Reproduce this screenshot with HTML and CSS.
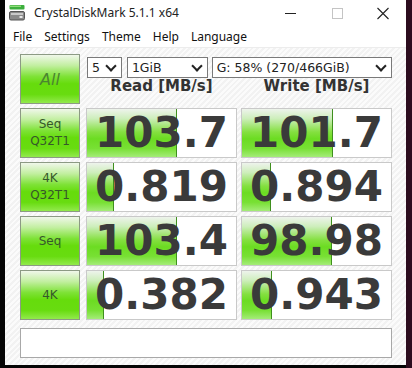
FILE: index.html
```html
<!DOCTYPE html>
<html lang="en">

<head>
  <meta charset="utf-8">
  <title>CrystalDiskMark 5.1.1 x64</title>
  <link rel="stylesheet" href="styles.css">
</head>

<body>
  <div class="window">

    <!-- Title bar -->
    <div class="titlebar">
      <svg class="app-icon" width="16" height="16" viewBox="0 0 16 16">
        <rect x="0.5" y="0" width="15" height="4.5" rx="1" fill="#3cae3c" />
        <rect x="1" y="0.6" width="11" height="1.4" fill="#8fdc7a" />
        <rect x="0.5" y="6.5" width="15" height="8.5" rx="1.5" fill="#8a8a8a" stroke="#555" />
        <rect x="2" y="8" width="12" height="2" fill="#c9c9c9" />
        <rect x="10.5" y="11" width="3" height="2" fill="#e8e8e8" />
      </svg>
      <span class="app-title">CrystalDiskMark 5.1.1 x64</span>
      <div class="controls">
        <svg class="ctl" width="46" height="24" viewBox="0 0 46 24">
          <line x1="17" y1="12.5" x2="28" y2="12.5" stroke="#222" stroke-width="1" />
        </svg>
        <svg class="ctl" width="46" height="24" viewBox="0 0 46 24">
          <rect x="18.5" y="7.5" width="10" height="10" fill="none" stroke="#c4c4c4" />
        </svg>
        <svg class="ctl" width="46" height="24" viewBox="0 0 46 24">
          <path d="M17.5 7 L28.5 18 M28.5 7 L17.5 18" stroke="#222" stroke-width="1.1" />
        </svg>
      </div>
    </div>

    <!-- Menu -->
    <div class="menubar">
      <span>File</span>
      <span>Settings</span>
      <span>Theme</span>
      <span>Help</span>
      <span>Language</span>
    </div>

    <!-- Benchmark panel -->
    <div class="main">
      <div class="row top-row">
        <div class="btn btn-all">All</div>
        <div class="top-controls">
          <div class="selects">
            <div class="select sel-count">5<span class="chev"></span></div>
            <div class="select sel-size">1GiB<span class="chev"></span></div>
            <div class="select sel-drive">G: 58% (270/466GiB)<span class="chev"></span></div>
          </div>
          <div class="headers">
            <div class="head">Read [MB/s]</div>
            <div class="head">Write [MB/s]</div>
          </div>
        </div>
      </div>

      <div class="row">
        <div class="btn">Seq<br>Q32T1</div>
        <div class="result"><div class="bar" style="width: 89px;"></div><span>103.7</span></div>
        <div class="result"><div class="bar" style="width: 90px;"></div><span>101.7</span></div>
      </div>

      <div class="row">
        <div class="btn">4K<br>Q32T1</div>
        <div class="result"><div class="bar" style="width: 26px;"></div><span>0.819</span></div>
        <div class="result"><div class="bar" style="width: 28px;"></div><span>0.894</span></div>
      </div>

      <div class="row">
        <div class="btn">Seq</div>
        <div class="result"><div class="bar" style="width: 89px;"></div><span>103.4</span></div>
        <div class="result"><div class="bar" style="width: 89px;"></div><span>98.98</span></div>
      </div>

      <div class="row">
        <div class="btn">4K</div>
        <div class="result"><div class="bar" style="width: 16px;"></div><span>0.382</span></div>
        <div class="result"><div class="bar" style="width: 29px;"></div><span>0.943</span></div>
      </div>

      <div class="comment"></div>
    </div>

  </div>
</body>

</html>
```

FILE: styles.css
```css
body {
  margin: 0;
  background-color: #000;
  background-image: linear-gradient(90deg, #050505 0px, #050505 406px, #2c0c1e 406px);
  width: 412px;
  height: 368px;
  overflow: hidden;
}

.window {
  margin-left: 5px;
  width: 401px;
  height: 365px;
  background-color: #fff;
  overflow: hidden;
}

/* Title bar */
.titlebar {
  display: flex;
  align-items: center;
  height: 25px;
  font-family: "Noto Sans", sans-serif;
  font-size: 12px;
  color: #222;
}

.app-icon {
  margin-left: 4px;
}

.app-title {
  margin-left: 9px;
  margin-top: -1px;
}

.controls {
  display: flex;
  margin-left: auto;
}

.ctl {
  display: block;
}

/* Menu */
.menubar {
  display: flex;
  gap: 12px;
  height: 22px;
  align-items: center;
  padding-left: 8px;
  font-family: "Noto Sans", sans-serif;
  font-size: 12px;
  color: #111;
}

/* Main panel */
.main {
  padding: 6px 14px 0 15px;
  height: 312px;
  background-color: #f7f7f7;
  background-image: repeating-linear-gradient(135deg, #fbfbfb 0px, #fbfbfb 2px, #f2f2f2 2px, #f2f2f2 4px);
  border-top: 1px solid #ececec;
}

.row {
  display: flex;
  gap: 4px;
  height: 50px;
  margin-bottom: 4px;
}

.btn {
  box-sizing: border-box;
  width: 60px;
  height: 50px;
  margin-right: 2px;
  border: 1px solid #8c9a84;
  background: linear-gradient(#f0f7ea 0%, #c2efa0 22%, #7ee236 45%, #66dc0c 60%, #68dc10 82%, #92ea4c 100%);
  display: flex;
  align-items: center;
  justify-content: center;
  text-align: center;
  font-family: "DejaVu Sans", sans-serif;
  font-size: 12px;
  line-height: 17px;
  color: #36582b;
}

.btn-all {
  font-size: 16px;
  color: #4b8530;
  font-style: italic;
}

.top-controls {
  width: 306px;
  padding-top: 3px;
}

.selects {
  display: flex;
  gap: 5px;
  margin-left: 1px;
}

.select {
  box-sizing: border-box;
  position: relative;
  height: 21px;
  border: 1px solid #7a7a7a;
  background-color: #fff;
  font-family: "DejaVu Sans", sans-serif;
  font-size: 12.5px;
  line-height: 19px;
  padding-left: 4px;
  color: #222;
}

.sel-count {
  width: 35px;
}

.sel-size {
  width: 81px;
  margin-right: -1px;
}

.sel-drive {
  width: 181px;
}

.chev {
  position: absolute;
  right: 6px;
  top: 4px;
  width: 6px;
  height: 6px;
  border-right: 2px solid #222;
  border-bottom: 2px solid #222;
  transform: rotate(45deg);
}

.headers {
  display: flex;
  gap: 4px;
}

.head {
  width: 151px;
  text-align: center;
  font-family: "DejaVu Sans", sans-serif;
  font-weight: bold;
  font-size: 15px;
  line-height: 16px;
  color: #333;
}

.result {
  box-sizing: border-box;
  position: relative;
  width: 151px;
  height: 50px;
  border: 1px solid #c9c9c9;
  background-color: #fff;
  display: flex;
  align-items: center;
  justify-content: center;
  overflow: hidden;
}

.bar {
  position: absolute;
  left: 0;
  top: 0;
  bottom: 0;
  border-right: 1px solid #3f8f1e;
  background: linear-gradient(#eef3ec 0%, #cdeebb 20%, #84e040 48%, #6cdc22 62%, #78e034 82%, #a4ec78 100%);
}

.result span {
  position: relative;
  font-family: "DejaVu Sans", sans-serif;
  font-weight: bold;
  font-size: 42px;
  color: #3a3a3a;
  line-height: 48px;
}

.comment {
  box-sizing: border-box;
  height: 30px;
  width: 372px;
  margin-top: 8px;
  border: 1px solid #a8a8a8;
  background-color: #fff;
}
```
